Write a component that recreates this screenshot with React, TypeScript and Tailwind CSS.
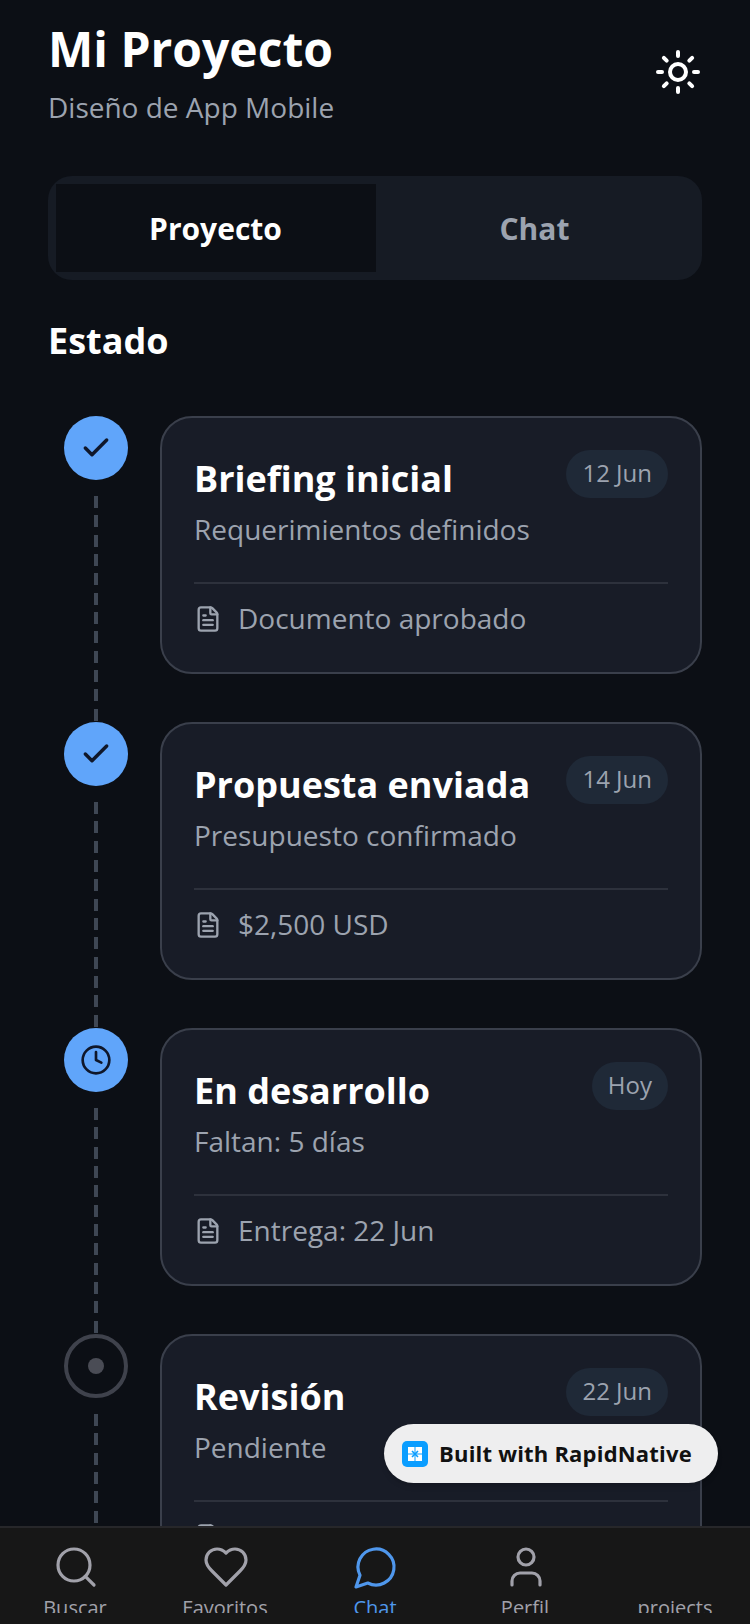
import { FileText, Search, User } from "lucide-react";

type Step = {
  title: string;
  subtitle: string;
  date: string;
  note: string;
  status: "done" | "current" | "pending";
};

const steps: Step[] = [
  { title: "Briefing inicial", subtitle: "Requerimientos definidos", date: "12 Jun", note: "Documento aprobado", status: "done" },
  { title: "Propuesta enviada", subtitle: "Presupuesto confirmado", date: "14 Jun", note: "$2,500 USD", status: "done" },
  { title: "En desarrollo", subtitle: "Faltan: 5 días", date: "Hoy", note: "Entrega: 22 Jun", status: "current" },
  { title: "Revisión", subtitle: "Pendiente", date: "22 Jun", note: "Entrega final", status: "pending" },
];

function SunIcon() {
  return (
    <svg width="48" height="48" viewBox="0 0 24 24" fill="none" stroke="currentColor" strokeWidth="2" strokeLinecap="round" strokeLinejoin="round">
      <circle cx="12" cy="12" r="4" />
      <path d="M12 2v2" />
      <path d="M12 20v2" />
      <path d="m4.93 4.93 1.41 1.41" />
      <path d="m17.66 17.66 1.41 1.41" />
      <path d="M2 12h2" />
      <path d="M20 12h2" />
      <path d="m6.34 17.66-1.41 1.41" />
      <path d="m19.07 4.93-1.41 1.41" />
    </svg>
  );
}

function StepMarker({ status }: { status: Step["status"] }) {
  if (status === "pending") {
    return (
      <div className="flex h-16 w-16 shrink-0 items-center justify-center rounded-full border-4 border-[#3f424c]">
        <div className="h-4 w-4 rounded-full bg-[#4a4c55]" />
      </div>
    );
  }
  return (
    <div className="flex h-16 w-16 shrink-0 items-center justify-center rounded-full bg-[#60a5fa] text-[#0f172a]">
      {status === "done" ? (
        <svg width="32" height="32" viewBox="0 0 24 24" fill="none" stroke="currentColor" strokeWidth="2.6" strokeLinecap="round" strokeLinejoin="round">
          <path d="M20 6 9 17l-5-5" />
        </svg>
      ) : (
        <svg width="32" height="32" viewBox="0 0 24 24" fill="none" stroke="currentColor" strokeWidth="2" strokeLinecap="round" strokeLinejoin="round">
          <circle cx="12" cy="12" r="10" />
          <path d="M12 6v6l4 2" />
        </svg>
      )}
    </div>
  );
}

function StepRow({ step }: { step: Step }) {
  return (
    <div className="flex gap-8 pl-4">
      <div className="flex w-16 shrink-0 flex-col items-center">
        <StepMarker status={step.status} />
        <div className="mt-4 w-1 flex-1 bg-[repeating-linear-gradient(to_bottom,#3f4754_0,#3f4754_12px,transparent_12px,transparent_19.33px)]" />
      </div>
      <div className="mb-[48px] flex-1">
        <div className="h-[258px] rounded-[32px] border-2 border-[#3a3f4b] bg-[#181c27] px-8 pt-8">
          <div className="relative h-[119px]">
            <p className="pt-[2px] text-[36px] leading-[54px] font-bold text-white">{step.title}</p>
            <p className="pt-[2px] text-[28px] leading-[42px] text-[#9ca3af]">{step.subtitle}</p>
            <span className="absolute top-0 right-0 flex h-12 items-center rounded-3xl bg-[#1f2937] px-4 pb-[2px] text-2xl text-[#9ca3af]">{step.date}</span>
          </div>
          <div className="mt-[13px] flex items-center gap-4 border-t-2 border-[#2d313c] pt-[13px] text-[#9ca3af]">
            <FileText size={28} className="mt-[2px]" />
            <span className="text-[28px] leading-[42px]">{step.note}</span>
          </div>
        </div>
      </div>
    </div>
  );
}

function NavItem({ label, icon, active }: { label: string; icon?: React.ReactNode; active?: boolean }) {
  return (
    <div className={`flex w-[150px] flex-col items-center ${active ? "text-[#4f97ec]" : "text-[#a1a1aa]"}`}>
      <div className="h-12 w-12 shrink-0 pl-px">{icon}</div>
      <span className="mt-[2px] text-[20px] leading-[30px]">{label}</span>
    </div>
  );
}

export default function App() {
  return (
    <div className="relative flex h-[1624px] w-[750px] flex-col overflow-hidden bg-[#0c0f15] font-['Open_Sans',sans-serif]">
      <main className="min-h-0 flex-1 overflow-hidden px-12">
        <header className="flex items-center justify-between pt-[13px]">
          <div>
            <h1 className="text-[48px] leading-[72px] font-bold text-white">Mi Proyecto</h1>
            <p className="pt-px text-[28px] leading-[42px] text-[#9ca3af]">Diseño de App Mobile</p>
          </div>
          <div className="mt-[3px] text-white">
            <SunIcon />
          </div>
        </header>

        <div className="mt-[48px] flex h-[104px] rounded-3xl bg-[#161b24] p-2">
          <button className="w-[320px] bg-[#0c0f15] pr-px text-[30px] font-bold text-white">Proyecto</button>
          <button className="flex-1 pr-px text-[30px] font-bold text-[#9ca3af]">Chat</button>
        </div>

        <h2 className="mt-[34px] mb-[48px] text-[36px] leading-[54px] font-bold text-white">Estado</h2>

        {steps.map((step) => (
          <StepRow key={step.title} step={step} />
        ))}
      </main>

      <nav className="h-[98px] shrink-0 border-t-2 border-[#27272a] bg-[#171717] pb-[11px]">
        <div className="flex h-full overflow-hidden pt-[15px]">
          <NavItem label="Buscar" icon={<Search size={48} strokeWidth={1.6} />} />
          <NavItem
            label="Favoritos"
            icon={
              <svg width="48" height="48" viewBox="0 0 24 24" fill="none" stroke="currentColor" strokeWidth="1.6" strokeLinecap="round" strokeLinejoin="round">
                <path d="M19 14c1.49-1.46 3-3.21 3-5.5A5.5 5.5 0 0 0 16.5 3c-1.76 0-3 .5-4.5 2-1.5-1.5-2.74-2-4.5-2A5.5 5.5 0 0 0 2 8.5c0 2.3 1.5 4.05 3 5.5l7 7Z" />
              </svg>
            }
          />
          <NavItem
            label="Chat"
            active
            icon={
              <svg width="48" height="48" viewBox="0 0 24 24" fill="none" stroke="currentColor" strokeWidth="1.6" strokeLinecap="round" strokeLinejoin="round">
                <path d="M7.9 20A9 9 0 1 0 4 16.1L2 22Z" />
              </svg>
            }
          />
          <NavItem label="Perfil" icon={<User size={48} strokeWidth={1.6} />} />
          <NavItem label="projects" />
        </div>
      </nav>

      <div className="absolute top-[1424px] left-[384px] flex h-[59px] w-[334px] items-center gap-[11px] rounded-full bg-[#eeeeef] pl-[18px] shadow-md">
        <svg width="26" height="26" viewBox="0 0 26 26">
          <rect width="26" height="26" rx="5" fill="#0a9dff" />
          <path d="M6 6h6.5v6.5H6zM13.5 6H20v6.5h-6.5zM6 13.5h6.5V20H6zM13.5 13.5H20V20h-6.5z" fill="#fff" />
          <path d="M10 10l6 6M16 10l-6 6" stroke="#0a9dff" strokeWidth="1.6" />
        </svg>
        <span className="text-[22px] font-bold tracking-[0.2px] text-[#111]">Built with RapidNative</span>
      </div>
    </div>
  );
}
